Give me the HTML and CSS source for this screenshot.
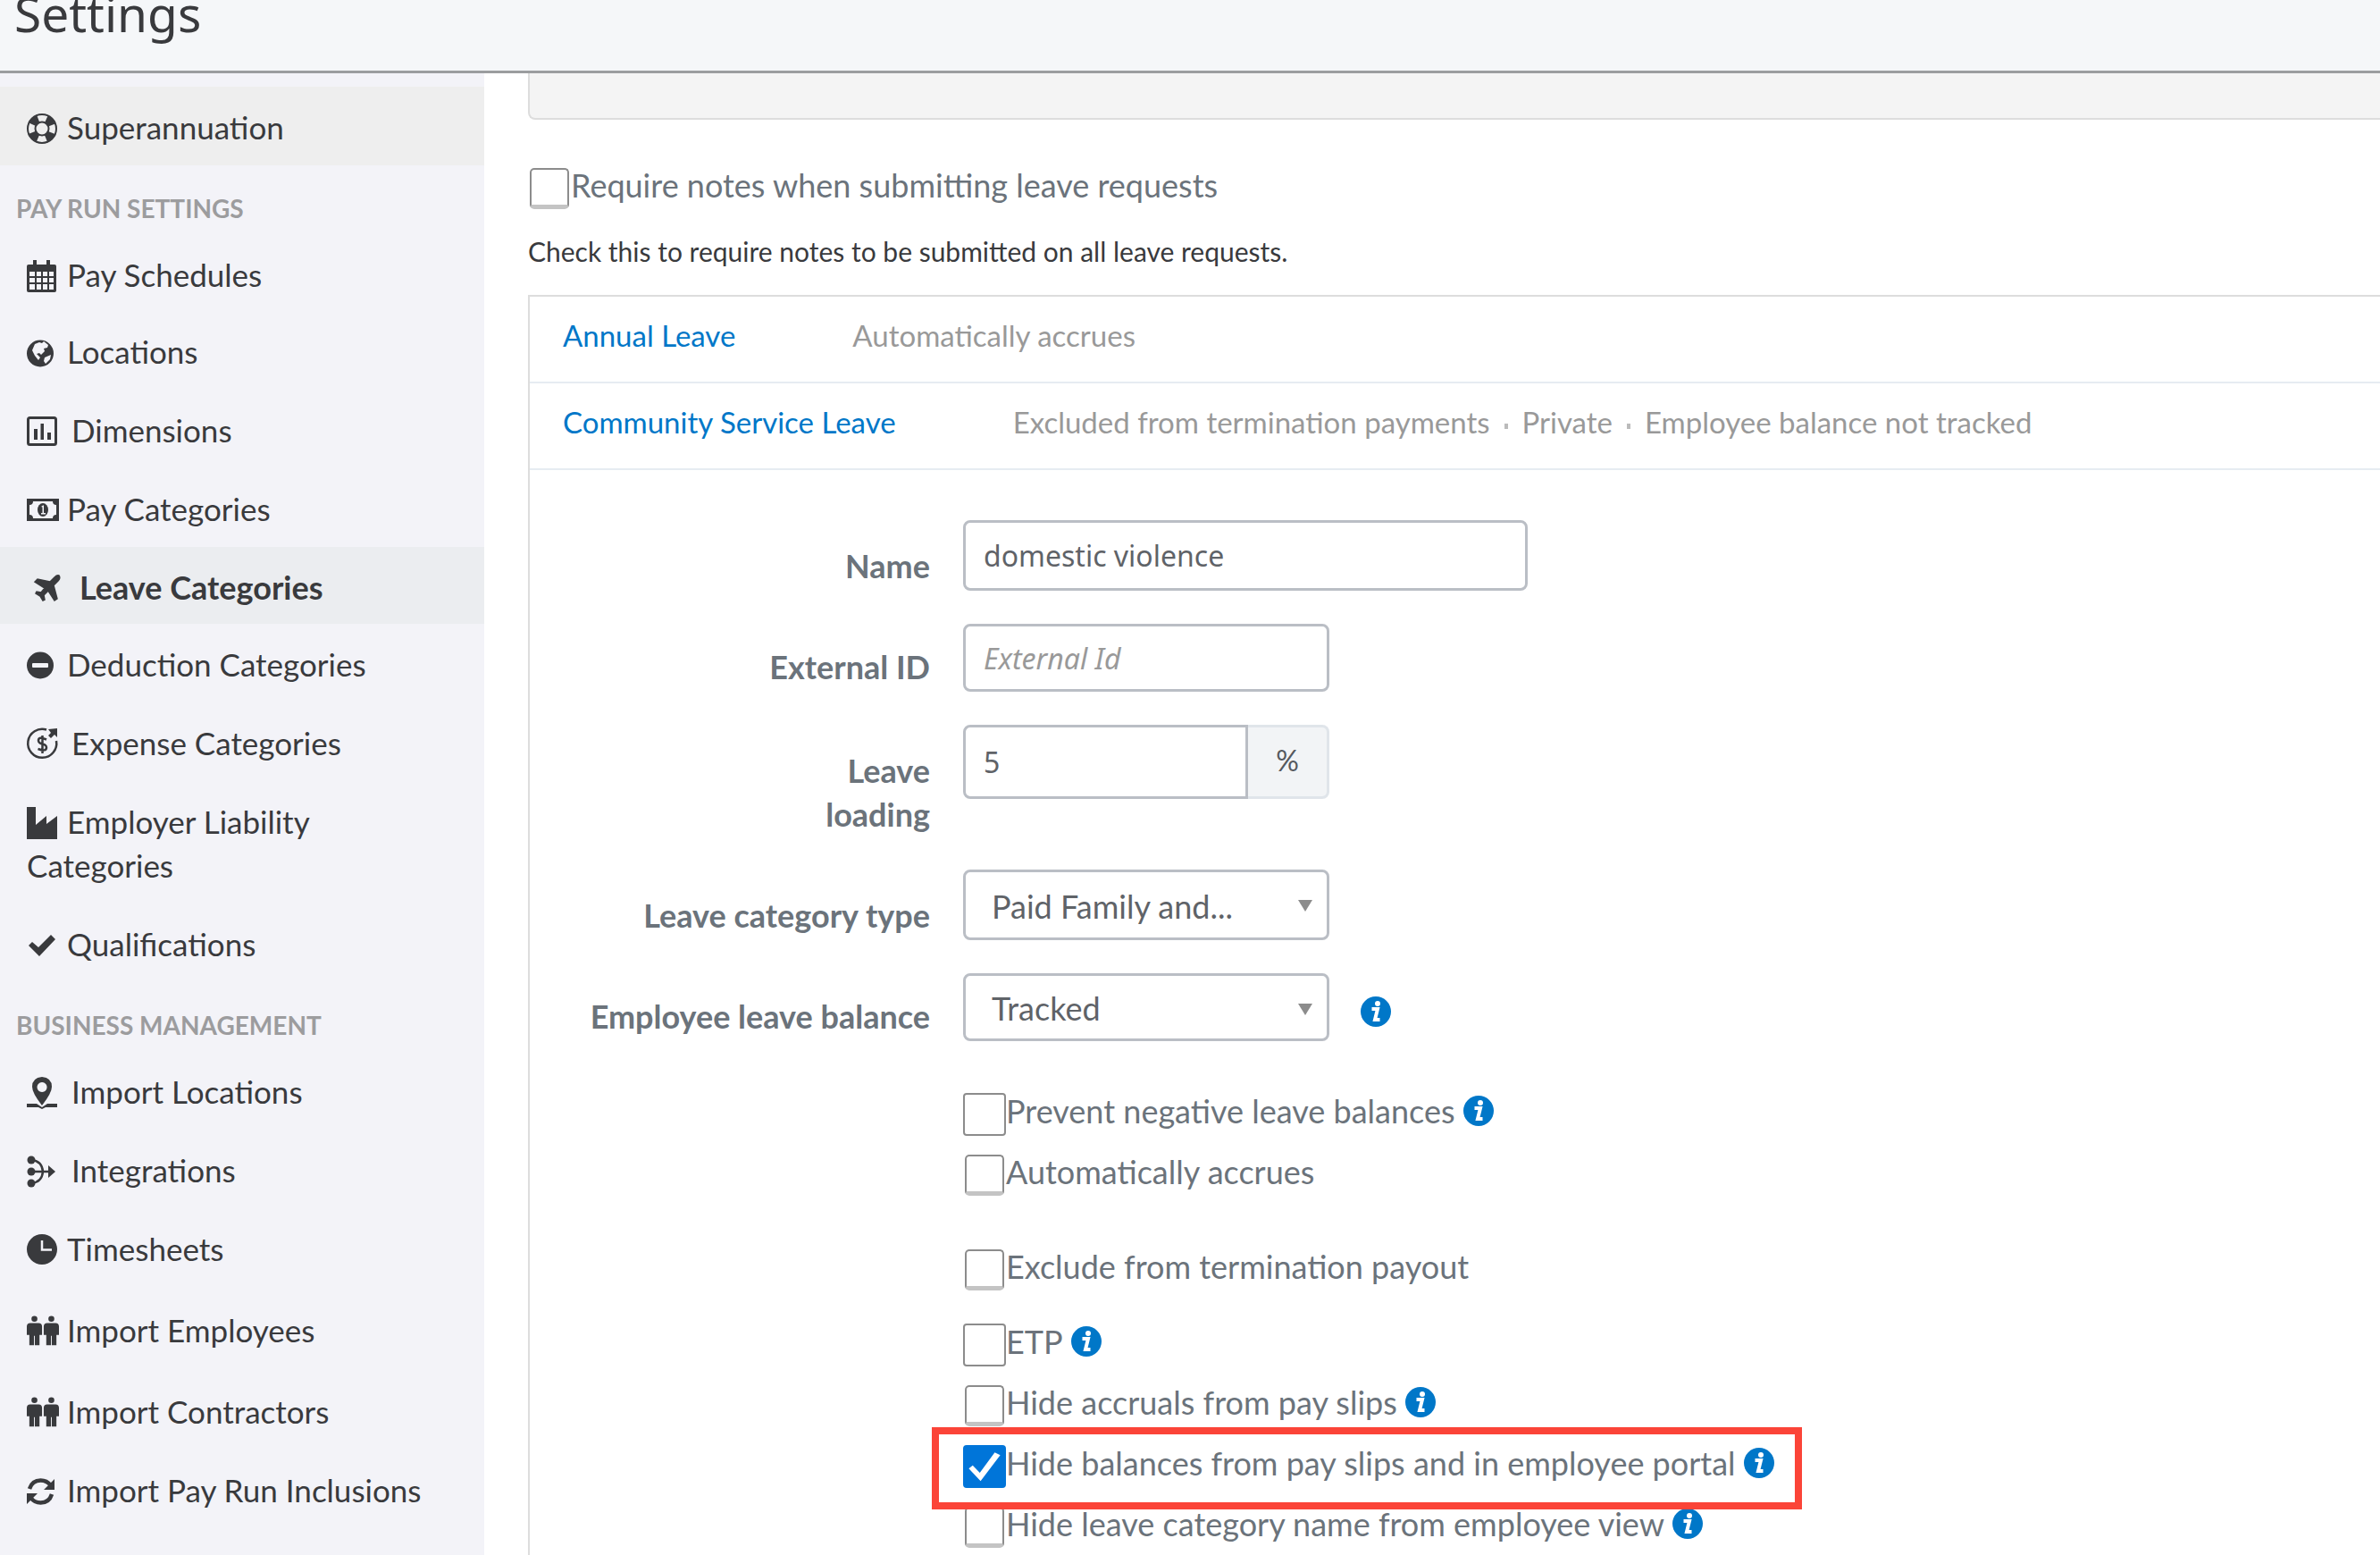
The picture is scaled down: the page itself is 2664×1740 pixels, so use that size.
FILE: index.html
```html
<!DOCTYPE html>
<html lang="en">
<head>
  <meta charset="UTF-8" />
  <meta name="viewport" content="width=device-width, initial-scale=1.0"/>
  <title>Settings</title>
  <link rel="stylesheet" href="styles.css">
</head>
<body>
  <!-- shared icons -->
  <svg class="sprite" aria-hidden="true">
    <symbol id="info" viewBox="0 0 34 34">
      <circle cx="17" cy="17" r="17" fill="#0077c8"/>
      <circle cx="19" cy="8" r="3" fill="#fff"/>
      <path d="M12.500 14h6.500l-3 12h5.500" fill="none" stroke="#fff" stroke-width="4"/>
    </symbol>
    <symbol id="people" viewBox="0 0 38 36">
      <circle cx="9" cy="3" r="3.500"/>
      <path d="M4 8h10q4 0 4 4v10h-3v12H9.500V23h-1v11H3V22H0V12q0-4 4-4z"/>
      <circle cx="29" cy="3" r="3.500"/>
      <path d="M24 8h10q4 0 4 4v10h-3v12h-5.500V23h-1v11H23V22h-3V12q0-4 4-4z"/>
    </symbol>
  </svg>

  <header class="page-header">
    <h1>Settings</h1>
  </header>

  <div class="layout">
    <nav class="sidebar">
      <a href="#" class="nav-item hovered"><svg class="icon" viewBox="0 0 36 36"><g fill="none" stroke="currentColor"><circle cx="17" cy="18" r="16" stroke-width="2"/><circle cx="17" cy="18" r="7.500" stroke-width="2"/><circle cx="17" cy="18" r="12" stroke-width="9" stroke-dasharray="9.400 9.450" stroke-dashoffset="-4.700"/></g></svg>Superannuation</a>

      <h2>PAY RUN SETTINGS</h2>
      <a href="#" class="nav-item short"><svg class="icon" viewBox="0 0 36 36"><path d="M2 5h29q2 0 2 2v27q0 2-2 2H2q-2 0-2-2V7q0-2 2-2z"/><path d="M7 0h4v9H7zM22 0h4v9h-4z"/><path d="M3 13h6v5H3zM11 13h5v5h-5zM18 13h5v5h-5zM25 13h5v5h-5zM3 20h6v5H3zM11 20h5v5h-5zM18 20h5v5h-5zM25 20h5v5h-5zM3 27h6v6H3zM11 27h5v6h-5zM18 27h5v6h-5zM25 27h5v6h-5z" fill="#f3f3f8"/></svg>Pay Schedules</a>
      <a href="#" class="nav-item"><svg class="icon" viewBox="0 0 36 36"><circle cx="15" cy="18.500" r="15"/><path d="M9 8l5-2 3 1 2-2 5 4-1 3-4 1 1 3-4 4-2-2-3 1 4 4-2 3-4-5-3-6zM20 23l7-3-1 5-5 5-2-3z" fill="#f3f3f8"/></svg>Locations</a>
      <a href="#" class="nav-item"><svg class="icon wide" viewBox="0 0 36 36"><rect x="1.500" y="2.500" width="31" height="30" rx="2" fill="none" stroke="currentColor" stroke-width="3"/><path d="M8 15h4v12H8zM15.500 9h3.500v18h-3.500zM23 19h4v8h-4z"/></svg>Dimensions</a>
      <a href="#" class="nav-item"><svg class="icon" viewBox="0 0 36 36"><path d="M0 5h36v25H0zM7 8q0 4-4 4v11q4 0 4 4h22q0-4 4-4V12q-4 0-4-4z" fill-rule="evenodd"/><ellipse cx="18" cy="17.500" rx="6" ry="7.500"/><path d="M16 14l2-1.500h1V21h2v1.500h-5V21h1.500v-6.500z" fill="#f3f3f8"/></svg>Pay Categories</a>
      <a href="#" class="nav-item short active"><svg class="icon wide" viewBox="0 0 36 36"><path d="M27 3q2 3-1 6l-5 5 4 15-3 2-7-11-5 5 1 5-2 1-3-5-5-3 1-2 5 1 4-5L0 10l3-3 14 3 5-5q3-3 5-2z" stroke="currentColor" stroke-width="1.500"/></svg>Leave Categories</a>
      <a href="#" class="nav-item"><svg class="icon" viewBox="0 0 36 36"><circle cx="15" cy="17.500" r="15"/><rect x="6" y="15" width="18" height="5" rx="1" fill="#f3f3f8"/></svg>Deduction Categories</a>
      <a href="#" class="nav-item"><svg class="icon wide" viewBox="0 0 36 36"><path d="M22 1.500A16 16 0 1 0 33 14" fill="none" stroke="currentColor" stroke-width="2.500"/><path d="M24 1l10-1v10l-3-3-4 4-3-3 3-3z"/><path d="M22 12.500q-9-4-9 1 0 3 4.500 4t4.500 4q0 5-9.500 1.500M17.500 8v20" fill="none" stroke="currentColor" stroke-width="2.500"/></svg>Expense Categories</a>
      <a href="#" class="nav-item"><svg class="icon" viewBox="0 0 36 36"><path d="M0 0h10v20l12-10v9l12-9v26H0z"/></svg>Employer Liability Categories</a>
      <a href="#" class="nav-item"><svg class="icon" viewBox="0 0 36 36"><path d="M2 18l4-4 7 6L27 6l5 5-18 19z"/></svg>Qualifications</a>

      <h2>BUSINESS MANAGEMENT</h2>
      <a href="#" class="nav-item"><svg class="icon wide" viewBox="0 0 36 36"><path d="M17 0q11 1 11 11 0 7-11 21Q6 18 6 11 6 1 17 0zM17 6a5.500 5.500 0 1 0 .1 0z" fill-rule="evenodd"/><path d="M0 30h11l6 4 6-4h11v4H21l-4 2-4-2H0z"/></svg>Import Locations</a>
      <a href="#" class="nav-item"><svg class="icon wide" viewBox="0 0 36 36"><circle cx="5" cy="5" r="4.500"/><circle cx="5" cy="18" r="4.500"/><circle cx="5" cy="31" r="4.500"/><path d="M5 5q12 1 13 13-1 12-13 13M5 18h23" fill="none" stroke="currentColor" stroke-width="2.500"/><path d="M24 11l8 7-8 7z"/></svg>Integrations</a>
      <a href="#" class="nav-item tall"><svg class="icon" viewBox="0 0 36 36"><circle cx="17" cy="17" r="17"/><path d="M17 7v10.500h11" fill="none" stroke="#f3f3f8" stroke-width="2.500"/></svg>Timesheets</a>
      <a href="#" class="nav-item tall"><svg class="icon"><use href="#people"/></svg>Import Employees</a>
      <a href="#" class="nav-item"><svg class="icon"><use href="#people"/></svg>Import Contractors</a>
      <a href="#" class="nav-item"><svg class="icon" viewBox="0 0 36 36"><path d="M3 15Q6 5.500 15.500 5.500q7 0 11 5.500M28 21q-3 9.500-12.500 9.500-7 0-11-5.500" fill="none" stroke="currentColor" stroke-width="4.500"/><path d="M31 4v12H19zM0 32V20h12z"/></svg>Import Pay Run Inclusions</a>
    </nav>

    <main class="content">
      <div class="panel"></div>

      <div class="check-row notes">
        <input type="checkbox" id="requireNotes">
        <label for="requireNotes">Require notes when submitting leave requests</label>
      </div>
      <p class="help">Check this to require notes to be submitted on all leave requests.</p>

      <div class="categories">
        <div class="category">
          <a href="#">Annual Leave</a>
          <span>Automatically accrues</span>
        </div>
        <div class="category">
          <a href="#">Community Service Leave</a>
          <span>Excluded from termination payments</span>
          <i class="dot"></i>
          <span>Private</span>
          <i class="dot"></i>
          <span>Employee balance not tracked</span>
        </div>

        <form class="category-form">
          <div class="field">
            <label for="name">Name</label>
            <input type="text" id="name" class="text-input long" value="domestic violence">
          </div>
          <div class="field low">
            <label for="externalId">External ID</label>
            <input type="text" id="externalId" class="text-input" placeholder="External Id">
          </div>
          <div class="field">
            <label for="loading">Leave<br>loading</label>
            <div class="input-group">
              <input type="text" id="loading" class="text-input" value="5">
              <span class="addon">%</span>
            </div>
          </div>
          <div class="field">
            <label for="type">Leave category type</label>
            <div class="select-wrap">
              <select id="type"><option>Paid Family and...</option></select>
            </div>
          </div>
          <div class="field low">
            <label for="balance">Employee leave balance</label>
            <div class="select-wrap">
              <select id="balance"><option>Tracked</option></select>
            </div>
            <svg class="info beside"><use href="#info"/></svg>
          </div>

          <div class="checks">
            <div class="check-row">
              <input type="checkbox" id="negative" class="large">
              <label for="negative">Prevent negative leave balances</label>
              <svg class="info"><use href="#info"/></svg>
            </div>
            <div class="check-row group-end">
              <input type="checkbox" id="accrues">
              <label for="accrues">Automatically accrues</label>
            </div>
            <div class="check-row before-etp">
              <input type="checkbox" id="termination">
              <label for="termination">Exclude from termination payout</label>
            </div>
            <div class="check-row">
              <input type="checkbox" id="etp" class="large">
              <label for="etp">ETP</label>
              <svg class="info"><use href="#info"/></svg>
            </div>
            <div class="check-row">
              <input type="checkbox" id="hideAccruals">
              <label for="hideAccruals">Hide accruals from pay slips</label>
              <svg class="info"><use href="#info"/></svg>
            </div>
            <div class="check-row highlighted">
              <input type="checkbox" id="hideBalances" class="large" checked>
              <label for="hideBalances">Hide balances from pay slips and in employee portal</label>
              <svg class="info"><use href="#info"/></svg>
            </div>
            <div class="check-row">
              <input type="checkbox" id="hideName">
              <label for="hideName">Hide leave category name from employee view</label>
              <svg class="info"><use href="#info"/></svg>
            </div>
          </div>
        </form>
      </div>
    </main>
  </div>
</body>
</html>
```
FILE: styles.css
```css
* {
  box-sizing: border-box;
}
body {
  margin: 0;
  font-family: Lato, "Open Sans", sans-serif;
  font-size: 36px;
  color: #6b737b;
  background-color: #fff;
}
a {
  text-decoration: none;
}
.sprite {
  display: none;
}
.page-header {
  height: 82px;
  padding-left: 16px;
  background-color: #f5f7f9;
  border-bottom: 3px solid #9b9d9f;
}
.page-header h1 {
  margin: 0;
  font-family: "Noto Sans", sans-serif;
  font-size: 55px;
  font-weight: normal;
  line-height: 30px;
  color: #393a3d;
}
.layout {
  display: flex;
  min-height: calc(100vh - 82px);
}

/* sidebar */
.sidebar {
  flex: 0 0 542px;
  padding-top: 15px;
  background-color: #f3f3f8;
}
.sidebar h2 {
  margin: 0;
  padding: 28px 18px 9px;
  font-size: 28px;
  line-height: 40px;
  color: #9c9c9e;
}
.nav-item {
  display: block;
  min-height: 88px;
  padding: 21px 60px 18px 30px;
  font-size: 35px;
  line-height: 49px;
  color: #393a3d;
}
.nav-item.hovered {
  background-color: #eee;
}
.nav-item.active {
  padding-left: 39px;
  font-size: 36px;
  font-weight: bold;
  background-color: #ebedf0;
}
.nav-item.short {
  min-height: 86px;
  padding-bottom: 16px;
}
.nav-item.tall {
  min-height: 91px;
}
.icon {
  width: 36px;
  height: 36px;
  margin-right: 9px;
  vertical-align: -6px;
  fill: currentColor;
  overflow: visible;
}
.icon.wide {
  margin-right: 14px;
}

/* main column */
.content {
  display: flex;
  flex: 1;
  flex-direction: column;
  min-width: 0;
  padding-left: 49px;
}
.panel {
  height: 52px;
  background-color: #f4f4f4;
  border: 2px solid #ddd;
  border-width: 0 0 2px 2px;
  border-radius: 0 0 0 8px;
}
.help {
  margin: 22px 0 25px;
  font-size: 30px;
  line-height: 48px;
  color: #393a3d;
}
.categories {
  flex: 1;
  border: 2px solid #ddd;
  border-width: 2px 0 0 2px;
}
.category {
  display: flex;
  padding: 19px 0 27px 37px;
  font-size: 33px;
  line-height: 49px;
  color: #999;
  border-bottom: 2px solid #e6ecf2;
}
.category a {
  margin-right: 131px;
  color: #0077c8;
}
.dot {
  width: 4px;
  height: 6px;
  margin: 26px 16px 0;
  background-color: #bbb;
}

/* check boxes */
.check-row {
  display: flex;
  width: fit-content;
  height: 48px;
  margin-bottom: 20px;
  line-height: 40px;
}
.check-row.notes {
  margin: 53px 0 0;
}
.check-row.group-end {
  margin-bottom: 58px;
}
.check-row.before-etp {
  margin-bottom: 36px;
}
input[type="checkbox"] {
  appearance: none;
  flex: none;
  width: 44px;
  height: 46px;
  margin: 1px 2px;
  background-color: #fff;
  border: 2px solid #8c8c8c;
  border-bottom: 5px solid #c4c4c4;
  border-radius: 5px;
}
input[type="checkbox"].large {
  width: 48px;
  height: 48px;
  margin: 0;
  border: 2px solid #8c8c8c;
  border-radius: 4px;
}
input[type="checkbox"].large:checked {
  background-color: #0075d9;
  border-color: #0075d9;
}
input[type="checkbox"]:checked::before {
  content: "";
  display: block;
  width: 44px;
  height: 44px;
  background-color: #fff;
  clip-path: polygon(10% 55%, 20% 47%, 38% 66%, 76% 14%, 90% 21%, 40% 87%);
}
.info {
  flex: none;
  width: 34px;
  height: 34px;
  margin: 3px 0 0 9px;
}
.info.beside {
  margin: 26px 0 0 35px;
}
.highlighted {
  position: relative;
}
.highlighted::after {
  content: "";
  position: absolute;
  top: -20px;
  right: -31px;
  bottom: -24px;
  left: -35px;
  border: 8px solid #fb4438;
  pointer-events: none;
}

/* form */
.category-form {
  padding-top: 56px;
}
.field {
  display: flex;
  margin-bottom: 37px;
}
.field > label {
  width: 448px;
  margin-right: 37px;
  padding-top: 27px;
  font-weight: bold;
  line-height: 49px;
  text-align: right;
}
.field.low > label {
  padding-top: 24px;
}
.text-input, select {
  width: 410px;
  height: 79px;
  padding: 0 20px;
  font-family: "Noto Sans", sans-serif;
  font-size: 32px;
  color: #5f6368;
  background-color: #fff;
  border: 3px solid #babec5;
  border-radius: 8px;
}
.text-input.long {
  width: 632px;
}
.field.low .text-input, .field.low select {
  height: 76px;
}
.text-input::placeholder {
  font-style: italic;
  color: #999;
}
.input-group {
  display: flex;
  width: 410px;
  height: 83px;
}
.input-group .text-input {
  width: 319px;
  height: 83px;
  border-radius: 8px 0 0 8px;
}
.addon {
  flex: 1;
  font-size: 32px;
  line-height: 74px;
  text-align: center;
  color: #55595e;
  background-color: #f2f4f6;
  border: 3px solid #e0e5ea;
  border-left: 0;
  border-radius: 0 8px 8px 0;
}
.select-wrap {
  position: relative;
}
select {
  appearance: none;
  display: block;
  padding: 2px 50px 0 29px;
  font-family: Lato, "Open Sans", sans-serif;
  font-size: 36px;
}
.select-wrap::after {
  content: "";
  position: absolute;
  top: 34px;
  right: 19px;
  border: 8px solid transparent;
  border-top: 13px solid #8c8c8c;
  border-bottom: 0;
}
.checks {
  padding: 21px 0 0 485px;
}
.checks .check-row:last-child {
  margin-bottom: 0;
}
```
